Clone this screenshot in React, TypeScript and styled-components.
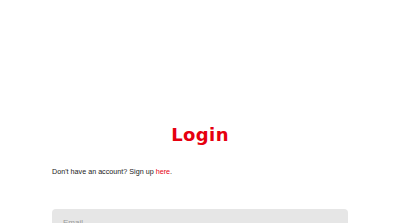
import React from 'react';
import styled, { createGlobalStyle } from 'styled-components';

const GlobalStyle = createGlobalStyle`
  html, body {
    margin: 0;
    padding: 0;
    background: #ffffff;
    font-family: "Liberation Sans", Arial, sans-serif;
  }
`;

const Page = styled.main`
  width: 296px;
  margin: 0 auto;
  padding-top: 124px;
`;

const Title = styled.h1`
  margin: 0;
  text-align: center;
  font-family: "DejaVu Sans", sans-serif;
  font-weight: 700;
  font-size: 18px;
  letter-spacing: 0.4px;
  line-height: 22px;
  color: #e6000f;
`;

const SignUpNote = styled.p`
  margin: 21px 0 0;
  font-size: 7.2px;
  line-height: 9px;
  color: #1a1a1a;
`;

const SignUpLink = styled.a`
  color: #e6000f;
  text-decoration: none;
`;

const Form = styled.form`
  display: flex;
  flex-direction: column;
  gap: 10px;
  margin-top: 33px;
`;

const Input = styled.input`
  box-sizing: border-box;
  width: 100%;
  height: 26px;
  padding: 0 11px;
  border: none;
  border-radius: 4px;
  background: #e6e6e6;
  font-family: "Liberation Sans", Arial, sans-serif;
  font-size: 8px;
  color: #333;
  outline: none;

  &::placeholder {
    color: #9a9a9a;
  }
`;

export default function App() {
  return (
    <>
      <GlobalStyle />
      <Page>
        <Title>Login</Title>
        <SignUpNote>
          Don't have an account? Sign up <SignUpLink href="#">here</SignUpLink>.
        </SignUpNote>
        <Form onSubmit={(e) => e.preventDefault()}>
          <Input type="email" placeholder="Email" />
          <Input type="password" placeholder="Password" />
        </Form>
      </Page>
    </>
  );
}
